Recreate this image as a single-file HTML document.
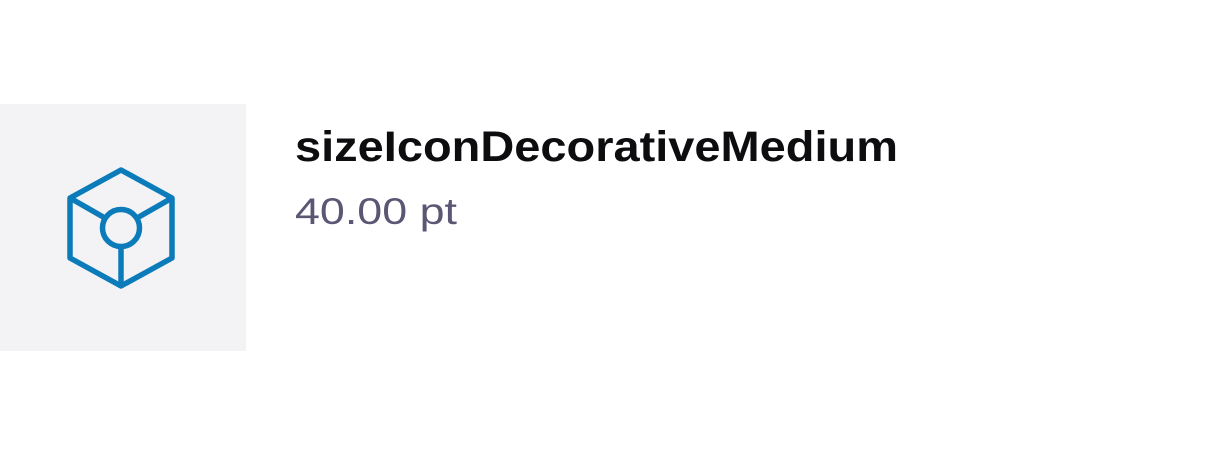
<!DOCTYPE html>
<html><head><style>
html,body{margin:0;padding:0;background:#fff;width:1206px;height:456px;overflow:hidden}
.box{position:absolute;left:0;top:104px;width:246px;height:247px;background:#f3f3f5}
svg{position:absolute;left:0;top:0}
</style></head><body>
<div class="box"></div>
<svg width="1206" height="456" viewBox="0 0 1206 456">
 <g fill="none" stroke="#0b7bba" stroke-width="5.5" stroke-linejoin="round">
  <polygon points="121,170 172,198 172,258 121,286 70,258 70,198"/>
  <circle cx="121" cy="228" r="18.5"/>
  <line x1="70" y1="198" x2="105" y2="218"/>
  <line x1="172" y1="198" x2="137" y2="218"/>
  <line x1="121" y1="247" x2="121" y2="286"/>
 </g>
 <text x="295" y="161" textLength="603" lengthAdjust="spacingAndGlyphs" font-family="Liberation Sans, sans-serif" font-weight="bold" font-size="43" fill="#0d0d10">sizeIconDecorativeMedium</text>
 <text x="295" y="224" textLength="162" lengthAdjust="spacingAndGlyphs" font-family="Liberation Sans, sans-serif" font-size="37" fill="#5a5775">40.00 pt</text>
</svg>
</body></html>
